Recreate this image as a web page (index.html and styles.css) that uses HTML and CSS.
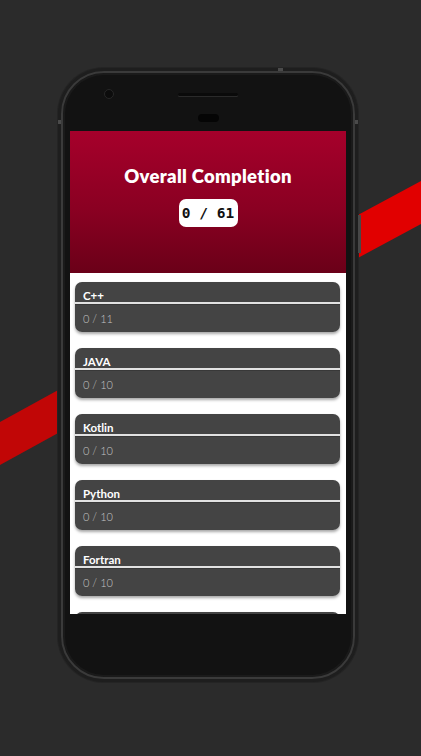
FILE: index.html
```html
<!DOCTYPE html>
<html lang="en">
<head>
<meta charset="utf-8">
<title>Overall Completion</title>
<link rel="stylesheet" href="styles.css">
</head>
<body>
<svg class="stripes" width="421" height="756" viewBox="0 0 421 756" aria-hidden="true">
  <polygon points="0,422 80,378 80,421 0,465" fill="#c10606"/>
  <polygon points="330,230 421,181 421,224 330,273" fill="#e10000"/>
</svg>
<div class="phone">
  <span class="camera"></span>
  <span class="speaker"></span>
  <span class="sensor"></span>
  <span class="side-btn"></span>
  <span class="antenna antenna-l"></span>
  <span class="antenna antenna-r"></span>
  <span class="antenna antenna-t"></span>
  <div class="rim">
    <div class="screen">
      <header class="hero">
        <h1 class="hero-title">Overall Completion</h1>
        <div class="total">0 / 61</div>
      </header>
      <ul class="list">
        <li class="card"><div class="card-head">C++</div><div class="card-body">0 / 11</div></li>
        <li class="card"><div class="card-head">JAVA</div><div class="card-body">0 / 10</div></li>
        <li class="card"><div class="card-head">Kotlin</div><div class="card-body">0 / 10</div></li>
        <li class="card"><div class="card-head">Python</div><div class="card-body">0 / 10</div></li>
        <li class="card"><div class="card-head">Fortran</div><div class="card-body">0 / 10</div></li>
        <li class="card"><div class="card-head"></div><div class="card-body"></div></li>
      </ul>
    </div>
  </div>
</div>
</body>
</html>
```
FILE: styles.css
```css
html, body {
  margin: 0;
  padding: 0;
}
body {
  background: #2b2b2b;
  width: 421px;
  height: 756px;
  overflow: hidden;
  position: relative;
  font-family: Lato, "Noto Sans", "Liberation Sans", sans-serif;
}
.stripes {
  position: absolute;
  left: 0;
  top: 0;
  z-index: 0;
}
.phone {
  position: relative;
  z-index: 1;
  margin: 68px 0 0 58px;
  width: 300px;
  height: 614px;
  box-sizing: border-box;
  border-radius: 46px;
  background: #1e1e1e;
  padding: 3px;
  box-shadow: 0 0 0 1px #242424;
}
.rim {
  height: 100%;
  box-sizing: border-box;
  border-radius: 43px;
  border: 2px solid #3a3a3a;
  background: #121212;
  padding: 58px 7px 0 7px;
  box-shadow: inset 0 0 0 2px #1a1a1a;
}
.camera {
  position: absolute;
  left: 46px;
  top: 21px;
  width: 8px;
  height: 8px;
  border-radius: 50%;
  background: #0c0c0c;
  border: 1px solid #272727;
}
.speaker {
  position: absolute;
  left: 120px;
  top: 25px;
  width: 60px;
  height: 3px;
  border-radius: 2px;
  background: #0a0a0a;
  box-shadow: 0 1px 0 #2a2a2a;
}
.sensor {
  position: absolute;
  left: 140px;
  top: 46px;
  width: 21px;
  height: 8px;
  border-radius: 4px;
  background: #050505;
}
.side-btn {
  position: absolute;
  right: -3px;
  top: 147px;
  width: 3px;
  height: 38px;
  background: #474747;
}
.antenna {
  position: absolute;
  background: #4a4a4a;
}
.antenna-l { left: 0; top: 52px; width: 3px; height: 4px; }
.antenna-r { right: 0; top: 52px; width: 3px; height: 4px; }
.antenna-t { left: 220px; top: 0; width: 5px; height: 3px; }
.screen {
  height: 483px;
  overflow: hidden;
  background: #ffffff;
}
.hero {
  height: 142px;
  box-sizing: border-box;
  padding-top: 35px;
  background: linear-gradient(180deg, #a6002b 0%, #8a0022 55%, #6a0018 100%);
  display: flex;
  flex-direction: column;
  align-items: center;
}
.hero-title {
  margin: 0;
  color: #ffffff;
  font-size: 18.5px;
  line-height: 20px;
  font-weight: 800;
  letter-spacing: 0.3px;
}
.total {
  margin-top: 13px;
  width: 59px;
  height: 28px;
  border-radius: 7px;
  background: #ffffff;
  color: #111111;
  font-family: "DejaVu Sans Mono", "Liberation Mono", monospace;
  font-weight: 700;
  font-size: 14.5px;
  display: flex;
  align-items: center;
  justify-content: center;
}
.list {
  list-style: none;
  margin: 0;
  padding: 9px 6px 0 5px;
  display: flex;
  flex-direction: column;
  gap: 16px;
}
.card {
  height: 50px;
  display: flex;
  flex-direction: column;
  border-radius: 7px;
  background: #e2e2e2;
  box-shadow: 0 2px 3px rgba(0, 0, 0, 0.35);
  flex-shrink: 0;
}
.card-head {
  height: 20px;
  box-sizing: border-box;
  padding: 7px 0 0 8px;
  background: #444444;
  border-radius: 7px 7px 0 0;
  color: #ffffff;
  font-size: 11.5px;
  line-height: 14px;
  font-weight: 700;
  overflow: hidden;
}
.card-body {
  margin-top: 2px;
  height: 28px;
  box-sizing: border-box;
  padding-left: 8px;
  background: #444444;
  border-top: 1px solid #383838;
  border-radius: 0 0 7px 7px;
  color: #c2c2c2;
  font-size: 11px;
  font-weight: 300;
  line-height: 1;
  display: flex;
  align-items: center;
}
```
